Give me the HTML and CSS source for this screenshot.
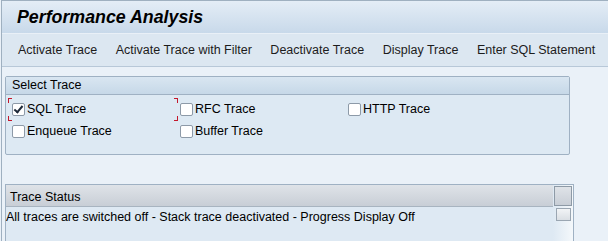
FILE: index.html
```html
<!DOCTYPE html>
<html lang="en">

<head>
    <meta charset="UTF-8">
    <title>Performance Analysis</title>
    <link rel="stylesheet" href="styles.css">
</head>

<body>
    <div class="screen">
        <div class="title-bar">
            <h1>Performance Analysis</h1>
        </div>

        <div class="toolbar">
            <a href="#">Activate Trace</a>
            <a href="#">Activate Trace with Filter</a>
            <a href="#">Deactivate Trace</a>
            <a href="#">Display Trace</a>
            <a href="#">Enter SQL Statement</a>
        </div>

        <div class="content">
            <div class="group">
                <div class="group-title">Select Trace</div>
                <div class="group-body">
                    <label class="check focus"><span class="box checked"></span>SQL Trace</label>
                    <label class="check"><span class="box"></span>RFC Trace</label>
                    <label class="check"><span class="box"></span>HTTP Trace</label>
                    <label class="check"><span class="box"></span>Enqueue Trace</label>
                    <label class="check"><span class="box"></span>Buffer Trace</label>
                </div>
            </div>

            <div class="status-table">
                <div class="status-main">
                    <div class="status-head">Trace Status</div>
                    <div class="status-row">All traces are switched off - Stack trace deactivated - Progress Display Off</div>
                </div>
                <div class="status-side">
                    <span class="corner-btn"></span>
                    <span class="row-btn"></span>
                </div>
            </div>
        </div>
    </div>
</body>

</html>
```

FILE: styles.css
```css
body {
    margin: 0;
    font-family: "Liberation Sans", Arial, sans-serif;
    font-size: 12.5px;
    color: #000;
    background-color: #eaf1f8;
}

.screen {
    height: 241px;
    overflow: hidden;
    border-left: 1px solid #9fb0c0;
    border-top: 1px solid #9fb0c0;
    margin-left: 1px;
}

.title-bar {
    height: 32px;
    background: linear-gradient(#e4edf6, #c8d9ea);
    border-bottom: 1px solid #e9f0f7;
    display: flex;
    align-items: center;
    padding-left: 15px;
}

.title-bar h1 {
    margin: 0;
    font-size: 17.8px;
    font-weight: bold;
    font-style: italic;
    color: #000;
}

.toolbar {
    height: 32px;
    background-color: #dce7f1;
    border-bottom: 1px solid #b8c8d8;
    display: flex;
    align-items: center;
    padding-left: 16px;
    gap: 18.5px;
}

.toolbar a {
    color: #1c1c1c;
    text-decoration: none;
}

.content {
    padding: 9px 0 0 3px;
}

.group {
    width: 563px;
    border: 1px solid #9fb1c3;
    border-radius: 2px;
    background-color: #dde9f3;
}

.group-title {
    height: 17px;
    line-height: 17px;
    padding-left: 6px;
    background: linear-gradient(#d9e6f1, #c6d8e8);
    border-bottom: 1px solid #9fb1c3;
}

.group-body {
    height: 56px;
    display: grid;
    grid-template-columns: 168px 168px 1fr;
    grid-auto-rows: 22px;
    padding: 3px 0 0 6px;
    align-content: start;
}

.check {
    display: flex;
    align-items: center;
    gap: 2px;
    position: relative;
}

.box {
    width: 11px;
    height: 11px;
    border: 1px solid #8d9aa8;
    border-radius: 2px;
    background-color: #fff;
    position: relative;
}

.box.checked::after {
    content: "";
    position: absolute;
    left: 3px;
    top: 0;
    width: 3px;
    height: 7px;
    border: solid #1e2a3a;
    border-width: 0 2px 2px 0;
    transform: rotate(40deg);
}

/* red focus frame corners */
.check.focus::before {
    content: "";
    position: absolute;
    left: -4px;
    top: 0;
    width: 170px;
    height: 23px;
    --red: linear-gradient(#c4182c, #c4182c);
    background:
        var(--red) left top / 4px 1px no-repeat,
        var(--red) left top / 1px 5px no-repeat,
        var(--red) left bottom / 4px 1px no-repeat,
        var(--red) left bottom / 1px 5px no-repeat,
        var(--red) right top / 4px 1px no-repeat,
        var(--red) right top / 1px 5px no-repeat,
        var(--red) right bottom / 4px 1px no-repeat,
        var(--red) right bottom / 1px 5px no-repeat;
}

.status-table {
    margin-top: 29px;
    width: 567px;
    height: 60px;
    border: 1px solid #9fb1c3;
    background-color: #dee9f3;
    display: flex;
}

.status-main {
    flex: 1;
}

.status-head {
    height: 19px;
    line-height: 21px;
    padding: 2px 0 0 4px;
    background: linear-gradient(#dfe3e8, #c8ced6);
    border-bottom: 1px solid #a8b4c0;
}

.status-row {
    height: 22px;
    line-height: 21px;
}

.status-side {
    width: 20px;
    display: flex;
    flex-direction: column;
    align-items: center;
    background: linear-gradient(90deg, #dee9f3, #f4f8fb);
}

.corner-btn {
    width: 16px;
    height: 18px;
    margin-top: 1px;
    border: 1px solid #8e9aa6;
    background: linear-gradient(#dfe3e8, #c8ced6);
}

.row-btn {
    width: 13px;
    height: 11px;
    margin-top: 2px;
    border: 1px solid #9aa6b2;
    background: linear-gradient(#f2f4f6, #dadfe4);
}
```
